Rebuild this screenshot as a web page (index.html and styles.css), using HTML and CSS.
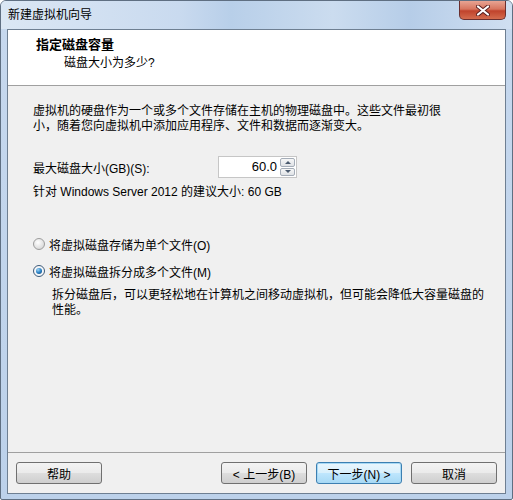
FILE: index.html
```html
<!DOCTYPE html>
<html lang="zh-CN">
<head>
    <meta charset="UTF-8">
    <title>新建虚拟机向导</title>
    <link rel="stylesheet" href="styles.css">
</head>
<body>
    <div class="window">
        <div class="titlebar">
            <span class="title">新建虚拟机向导</span>
            <div class="close-btn">
                <svg width="14" height="11" viewBox="0 0 14 11">
                    <path d="M2 1.5 L12 9.5 M12 1.5 L2 9.5" stroke="#5a2020" stroke-width="4" stroke-linecap="round"/>
                    <path d="M2 1.5 L12 9.5 M12 1.5 L2 9.5" stroke="#fff" stroke-width="2.2" stroke-linecap="round"/>
                </svg>
            </div>
        </div>

        <div class="client">
            <div class="header">
                <div class="header-title">指定磁盘容量</div>
                <div class="header-sub">磁盘大小为多少?</div>
            </div>

            <div class="content">
                <p class="intro">虚拟机的硬盘作为一个或多个文件存储在主机的物理磁盘中。这些文件最初很小，随着您向虚拟机中添加应用程序、文件和数据而逐渐变大。</p>

                <div class="size-row">
                    <span class="size-label">最大磁盘大小(GB)(S):</span>
                    <div class="spin">
                        <div class="spin-value">60.0</div>
                        <div class="spin-buttons">
                            <div class="spin-btn"><span class="arrow-up"></span></div>
                            <div class="spin-btn"><span class="arrow-down"></span></div>
                        </div>
                    </div>
                </div>

                <div class="hint">针对 Windows Server 2012 的建议大小: 60 GB</div>

                <div class="radio-row first">
                    <span class="radio"></span>
                    <span>将虚拟磁盘存储为单个文件(O)</span>
                </div>
                <div class="radio-row">
                    <span class="radio checked"></span>
                    <span>将虚拟磁盘拆分成多个文件(M)</span>
                </div>
                <p class="option-note">拆分磁盘后，可以更轻松地在计算机之间移动虚拟机，但可能会降低大容量磁盘的性能。</p>
            </div>

            <div class="footer">
                <button class="btn">帮助</button>
                <button class="btn back">&lt; 上一步(B)</button>
                <button class="btn focused">下一步(N) &gt;</button>
                <button class="btn">取消</button>
            </div>
        </div>
    </div>
</body>
</html>
```

FILE: styles.css
```css
body {
    margin: 0;
    padding: 0;
    font-family: "Liberation Sans", "Noto Sans CJK SC", sans-serif;
    font-size: 12px;
    color: #000;
    background: #fff;
}

.window {
    box-sizing: border-box;
    width: 513px;
    height: 500px;
    border: 1px solid #5f6f82;
    border-radius: 6px 6px 2px 2px;
    background: linear-gradient(to bottom, #d9e5f3 0%, #c6d8ee 30px, #bcd1ea 100%);
    display: flex;
    flex-direction: column;
    overflow: hidden;
}

.titlebar {
    height: 28px;
    display: flex;
    justify-content: space-between;
    align-items: flex-start;
    padding-left: 7px;
    background: linear-gradient(to right, #dbe7f4 0%, #c9daef 35%, #b8cfe9 45%, #cbdcef 65%, #b6cde8 80%, #d0dff1 100%);
}

.title {
    line-height: 28px;
    font-size: 12px;
    color: #000;
}

.close-btn {
    width: 45px;
    height: 18px;
    margin-right: 6px;
    border: 1px solid #6a2f2f;
    border-top: none;
    border-radius: 0 0 5px 5px;
    background: linear-gradient(to bottom, #e8a493 0%, #d7755f 45%, #c0432c 55%, #d46c4e 100%);
    display: flex;
    justify-content: center;
    align-items: center;
}

.client {
    height: 465px;
    box-sizing: border-box;
    margin: 0 6px;
    border: 1px solid #6e7f92;
    background: #f0f0f0;
    display: flex;
    flex-direction: column;
}

.header {
    height: 56px;
    box-sizing: border-box;
    background: #fff;
    border-bottom: 1px solid #a0a0a0;
    padding: 6px 0 0 28px;
}

.header-title {
    font-weight: bold;
    font-size: 13px;
    line-height: 17px;
    margin-bottom: 2px;
}

.header-sub {
    margin-left: 28px;
    line-height: 16px;
}

.content {
    flex: 1;
    padding: 18px 0 0 25px;
}

.intro {
    margin: 0;
    width: 410px;
    line-height: 15px;
}

.size-row {
    display: flex;
    align-items: center;
    margin-top: 22px;
    height: 22px;
}

.size-label {
    width: 185px;
}

.spin {
    display: flex;
    width: 79px;
    height: 22px;
    box-sizing: border-box;
    border: 1px solid #c6c6c6;
    background: #fff;
}

.spin-value {
    flex: 1;
    text-align: right;
    line-height: 20px;
    font-size: 13px;
    padding-right: 3px;
}

.spin-buttons {
    width: 15px;
    display: flex;
    flex-direction: column;
    padding: 1px 1px 1px 0;
    gap: 1px;
}

.spin-btn {
    flex: 1;
    border: 1px solid #a5adb8;
    border-radius: 2px;
    background: linear-gradient(to bottom, #f7f7f7, #dfe2e6);
    display: flex;
    justify-content: center;
    align-items: center;
}

.arrow-up,
.arrow-down {
    width: 0;
    height: 0;
    border-left: 3px solid transparent;
    border-right: 3px solid transparent;
}

.arrow-up {
    border-bottom: 3px solid #4a5a6e;
}

.arrow-down {
    border-top: 3px solid #4a5a6e;
}

.hint {
    margin-top: 7px;
    line-height: 15px;
}

.radio-row {
    display: flex;
    align-items: center;
    height: 16px;
    margin-top: 11px;
}

.radio-row.first {
    margin-top: 36px;
}

.radio {
    box-sizing: border-box;
    width: 12px;
    height: 12px;
    border-radius: 50%;
    border: 1px solid #9c9c9c;
    background: radial-gradient(circle at 40% 35%, #ffffff 0%, #e6e6e6 50%, #cfcfcf 100%);
    margin-right: 4px;
    display: flex;
    justify-content: center;
    align-items: center;
}

.radio.checked {
    border-color: #3d5a78;
    background: #f4f6f9;
}

.radio.checked::after {
    content: "";
    width: 6px;
    height: 6px;
    border-radius: 50%;
    background: radial-gradient(circle at 35% 30%, #9fd4f4 0%, #2a83c7 50%, #0f3c6a 100%);
}

.option-note {
    margin: 9px 0 0 19px;
    width: 440px;
    line-height: 15px;
}

.footer {
    border-top: 1px solid #a0a0a0;
    padding: 9px 8px 9px 8px;
    display: flex;
    gap: 9px;
}

.btn {
    width: 86px;
    height: 22px;
    box-sizing: border-box;
    border: 1px solid #707070;
    border-radius: 3px;
    background: linear-gradient(to bottom, #f3f3f3 0%, #ebebeb 48%, #dddddd 52%, #cfcfcf 100%);
    font-family: "Liberation Sans", "Noto Sans CJK SC", sans-serif;
    font-size: 12px;
    color: #000;
    padding: 0;
}

.btn.back {
    margin-left: auto;
}

.btn.focused {
    border-color: #3c7fb1;
    box-shadow: inset 0 0 0 1px #a7d9f5;
    background: linear-gradient(to bottom, #eaf6fd 0%, #d9f0fc 48%, #bee6fd 52%, #a7d9f5 100%);
}
```
